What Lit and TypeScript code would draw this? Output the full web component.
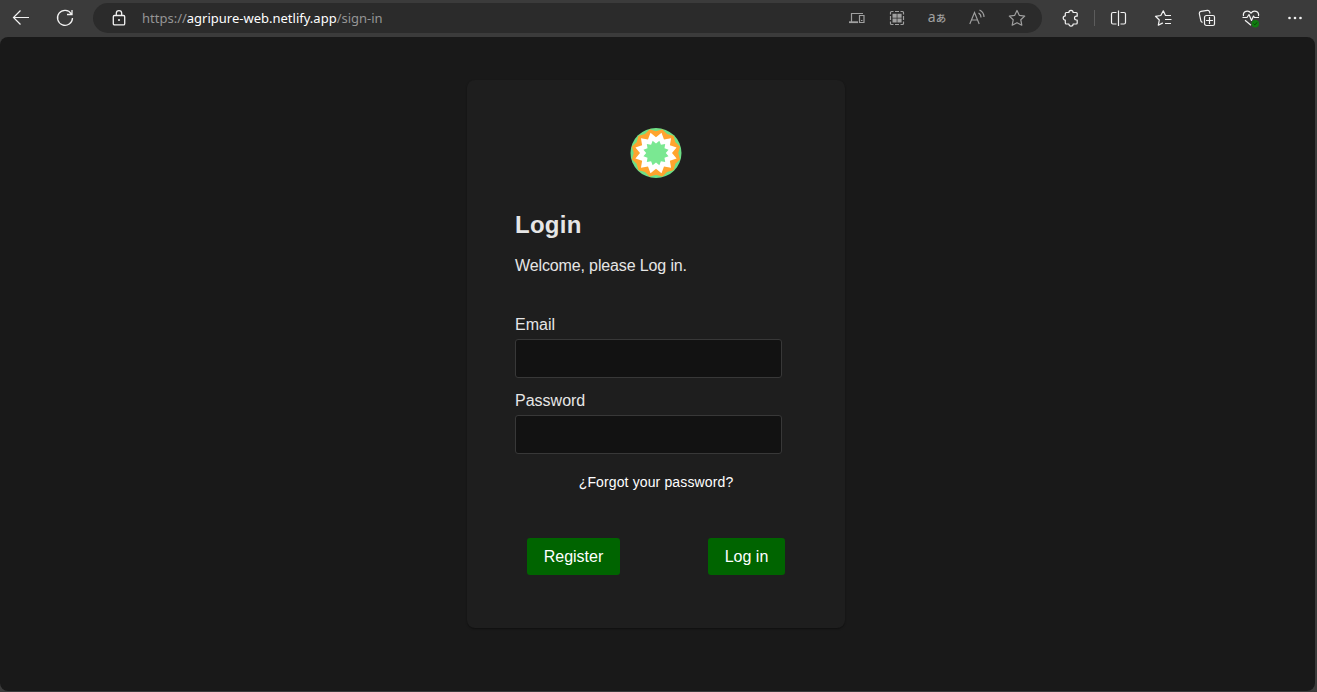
import { LitElement, html, css, svg } from "lit";
import { customElement } from "lit/decorators.js";

const star = (points: number, outer: number, inner: number) =>
  Array.from({ length: points * 2 }, (_, i) => {
    const a = ((i + 1) * Math.PI) / points - Math.PI / 2;
    const r = i % 2 ? outer : inner;
    return `${(26 + r * Math.cos(a + Math.PI / points)).toFixed(2)},${(25.5 + r * 0.98 * Math.sin(a + Math.PI / points)).toFixed(2)}`;
  }).join(" ");

const icons = {
  back: svg`<path stroke-width="1.2" d="M18 9.500H2.500M9.500 2.500l-7 7 7 7"/>`,
  reload: svg`<path stroke-width="1.3" d="M16.300 5.800A7.500 7.500 0 1 0 17.500 10M17 2v4.500h-5"/>`,
  lock: svg`<path stroke-width="1.3" d="M5.500 7.500h9a1.200 1.200 0 0 1 1.200 1.200v7a1.200 1.200 0 0 1-1.200 1.200h-9a1.200 1.200 0 0 1-1.200-1.200v-7a1.200 1.200 0 0 1 1.200-1.200zM7.300 7.500V5.300a2.700 2.700 0 0 1 5.400 0V7.500"/><circle cx="10" cy="12" r="1" fill="currentColor" stroke="none"/>`,
  devices: svg`<path stroke-width="1.200" d="M16 5.500H4.500v8.500M12.500 7.500h4.500v7h-4.500zM14 12.500h1.500"/><path stroke-width="1.800" d="M2 14.200h9"/>`,
  apps: svg`<path stroke-width="1.200" d="M3.500 6.500V4.500a1 1 0 0 1 1-1h2M8 3.500h4M13.500 3.500h2a1 1 0 0 1 1 1v2M16.500 8v4M16.500 13.500v2a1 1 0 0 1-1 1h-2M12 16.500H8M6.500 16.500h-2a1 1 0 0 1-1-1v-2M3.500 12V8"/><path stroke="none" fill="currentColor" d="M5.500 5.700h4.200v4h-4.200zM10.400 5.700h4.200v4h-4.200zM5.500 10.500h4.200v4h-4.200zM10.400 10.500h4.200v4h-4.200z"/>`,
  read: svg`<path stroke-width="1.150" d="M2.800 16L7.500 4.500 12.200 16M4.400 12h6.200M11.500 5a5 5 0 0 1 2.500 4.500M12.500 2a8 8 0 0 1 4.500 7"/>`,
  star: svg`<path stroke-width="1.200" stroke-linejoin="round" d="M10 2.500l2.400 4.900 5.300.7-3.900 3.700 1 5.400L10 14.700l-4.800 2.500 1-5.400-3.900-3.700 5.300-.7z"/>`,
  puzzle: svg`<path stroke-width="1.200" stroke-linejoin="round" d="M5.300 4.500h2.600a2.100 2.100 0 0 1 4.200 0h3.100a1 1 0 0 1 1 1v2.700h-.8a1.900 1.900 0 0 0 0 3.800h.8v3a1 1 0 0 1-1 1h-3.100a2.100 2.100 0 0 1-4.200 0H5.300a1 1 0 0 1-1-1v-2.900a2.100 2.100 0 0 1 0-4.200V5.500a1 1 0 0 1 1-1z"/>`,
  split: svg`<path stroke-width="1.200" d="M7.500 4.500h-3.500a1.500 1.500 0 0 0-1.500 1.500v8.500A1.500 1.500 0 0 0 4 16h3.500M11.500 4.500h3.500a1.500 1.500 0 0 1 1.500 1.500v8.500a1.500 1.500 0 0 1-1.500 1.500h-3.500M9.500 2.500v15.500"/>`,
  favourites: svg`<path stroke-width="1.200" stroke-linejoin="round" d="M18 7.500h-5.500L10.300 2.800 7.800 7.500 2.500 8.300l3.800 3.700-1 5.200 4.500-2.300M12 11.500h6.500M12 15.500h6"/>`,
  collections: svg`<path stroke-width="1.200" d="M5.500 14.500L4.800 14a2 2 0 0 1-1-1.400L2.300 5.500a2 2 0 0 1 1.600-2.200l6.500-1a2 2 0 0 1 2.200 1.500l.4 1.700M9.500 7.500h6.500a1.500 1.500 0 0 1 1.500 1.500v7a1.500 1.500 0 0 1-1.500 1.500h-6.500a2 2 0 0 1-2-2v-6a2 2 0 0 1 2-2zM12.500 9v7M9 12.500h7"/>`,
  health: svg`<path stroke-width="1.200" stroke-linejoin="round" d="M2.500 8.200C1.500 3 7.500 1.500 10 5.200c2.500-3.700 8.500-2.200 7.500 3M1.500 9.500H6l2-3 2.500 6 2-4.500 1 1.500H18M4 12.200l6 5"/><circle cx="14.300" cy="15.700" r="3.700" fill="#107c10" stroke="none"/><path stroke="#073f07" d="M12.500 15.700l1.300 1.200 2.300-2.500"/>`,
  more: svg`<g fill="currentColor" stroke="none"><circle cx="4.500" cy="10" r="1.300"/><circle cx="10" cy="10" r="1.300"/><circle cx="15.500" cy="10" r="1.300"/></g>`,
};
const icon = (name: keyof typeof icons) =>
  html`<svg class="icon" viewBox="0 0 20 20" fill="none" stroke="currentColor">${icons[name]}</svg>`;

@customElement("browser-bar")
export class BrowserBar extends LitElement {
  static styles = css`
    :host { display: flex; height: 37px; background: #3b3b3b; color: #f2f2f2; font-family: "Noto Sans", sans-serif; }
    .cell { width: 44px; height: 36px; display: flex; align-items: center; justify-content: center; flex: none; }
    .back { width: 42px; }
    .reload { width: 46px; margin-right: 5px; }
    .icon { width: 20px; height: 20px; display: block; }
    .address { flex: 1; height: 30px; margin-top: 3px; border-radius: 15px; background: #2b2b2b; display: flex; align-items: center; padding: 0 5px 0 16px; box-sizing: border-box; }
    .url { margin-left: 13px; flex: 1; font-size: 13px; line-height: 18px; color: #959595; white-space: nowrap; }
    .host { color: #fff; }
    .action { width: 40px; display: flex; justify-content: center; color: #a0a0a0; }
    .translate { display: flex; font: 14px/18px "Noto Sans", sans-serif; height: 20px; white-space: nowrap; }
    .kana { font: 500 10.5px/20px "Noto Sans CJK JP", sans-serif; }
    .puzzle { width: 52px; margin-left: 2px; padding-left: 1px; box-sizing: border-box; }
    .divider { width: 1px; height: 16px; margin: 10px 2px 0 -2px; background: #5c5c5c; }
  `;
  render() {
    return html`
      <div class="cell back">${icon("back")}</div>
      <div class="cell reload">${icon("reload")}</div>
      <div class="address">
        ${icon("lock")}
        <div class="url">https://<span class="host">agripure-web.netlify.app</span>/sign-in</div>
        <div class="action">${icon("devices")}</div>
        <div class="action">${icon("apps")}</div>
        <div class="action"><span class="translate">a<span class="kana">あ</span></span></div>
        <div class="action">${icon("read")}</div>
        <div class="action">${icon("star")}</div>
      </div>
      <div class="cell puzzle">${icon("puzzle")}</div>
      <div class="divider"></div>
      <div class="cell">${icon("split")}</div>
      <div class="cell">${icon("favourites")}</div>
      <div class="cell">${icon("collections")}</div>
      <div class="cell">${icon("health")}</div>
      <div class="cell">${icon("more")}</div>
    `;
  }
}

@customElement("login-card")
export class LoginCard extends LitElement {
  static styles = css`
    :host { display: flex; flex-direction: column; box-sizing: border-box; width: 378px; height: 548px; padding: 48px 48px 0; border-radius: 8px; background: #1e1e1e; color: #e6e6e6; box-shadow: 0 1px 2px rgba(0, 0, 0, 0.4); font: 16px/20px "Liberation Sans", Arial, sans-serif; }
    .logo { width: 52px; height: 51px; align-self: center; display: block; }
    .title { margin: 32px 0 0; font-size: 24px; line-height: 28px; font-weight: 700; letter-spacing: 0.25px; }
    .welcome { margin: 17px 0 0; letter-spacing: -0.13px; }
    .label { margin-top: 39px; }
    .second { margin-top: 13px; }
    .input { display: block; box-sizing: border-box; width: 267px; height: 39px; margin: 4px 0 0; padding: 0 8px; border: 1px solid #383838; border-radius: 3px; background: #121212; color: #fff; outline: 0; }
    .forgot { align-self: center; margin-top: 18px; font-size: 14px; letter-spacing: 0.13px; color: #fff; }
    .actions { display: flex; justify-content: space-between; padding: 0 12px; margin-top: 46px; }
    .button { height: 37px; border: 0; border-radius: 3px; padding: 0; background: #006400; color: #fff; font: inherit; }
    .register { width: 93px; }
    .submit { width: 77px; }
  `;
  render() {
    return html`
      <svg class="logo" viewBox="0 0 52 51">
        <ellipse cx="26" cy="25" rx="25.500" ry="25" fill="#6fdf85" />
        <g transform="translate(0 -0.500)">
          <polygon points=${star(12, 24, 21.5)} fill="#ffa42e" stroke="#ffa42e" stroke-width="1.500" stroke-linejoin="round" />
          <polygon points=${star(12, 21.3, 16)} fill="#fff" />
          <polygon points=${star(12, 13, 9.8)} fill="#7ae892" />
        </g>
      </svg>
      <h1 class="title">Login</h1>
      <p class="welcome">Welcome, please Log in.</p>
      <label class="label" for="email">Email</label>
      <input class="input" id="email" type="email" />
      <label class="label second" for="password">Password</label>
      <input class="input" id="password" type="password" />
      <div class="forgot">¿Forgot your password?</div>
      <div class="actions">
        <button class="button register">Register</button>
        <button class="button submit">Log in</button>
      </div>
    `;
  }
}

@customElement("app-root")
export class AppRoot extends LitElement {
  static styles = css`
    :host { display: flex; flex-direction: column; height: 692px; background: #3b3b3b; overflow: hidden; }
    .page { box-sizing: border-box; width: 1315px; height: 654px; border-radius: 8px; background: #191919; display: flex; justify-content: center; align-items: flex-start; padding: 43px 3px 0 0; }
  `;
  render() {
    return html`<browser-bar></browser-bar><main class="page"><login-card></login-card></main>`;
  }
}
